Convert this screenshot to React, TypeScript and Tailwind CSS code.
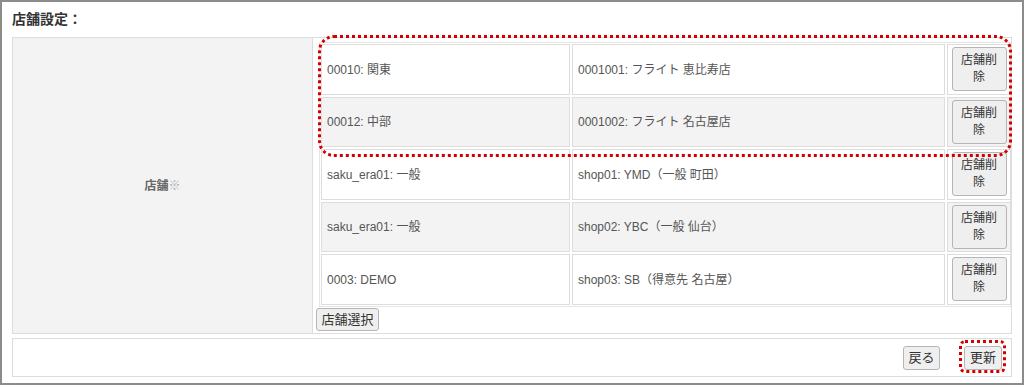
const rows = [
  { area: "00010: 関東", shop: "0001001: フライト 恵比寿店" },
  { area: "00012: 中部", shop: "0001002: フライト 名古屋店" },
  { area: "saku_era01: 一般", shop: "shop01: YMD（一般 町田）" },
  { area: "saku_era01: 一般", shop: "shop02: YBC（一般 仙台）" },
  { area: "0003: DEMO", shop: "shop03: SB（得意先 名古屋）" },
];

const btn =
  "rounded-[3px] border border-[#b5b5b5] bg-[#efefef] text-[12px] leading-[17px] text-[#333]";

export default function App() {
  return (
    <div
      className="relative w-[1024px] h-[385px] overflow-hidden border-2 border-[#8c8c8c] bg-white text-[#555]"
      style={{ fontFamily: '"Liberation Sans", "Noto Sans CJK JP", sans-serif' }}
    >
      <h2 className="h-[35px] px-[10px] pt-[8px] text-[14px] font-bold leading-[18px] text-[#333]">
        店舗設定：
      </h2>

      <div className="mx-[10px] flex h-[297px] border border-[#ddd]">
        <div className="flex w-[301px] items-center justify-center bg-[#f3f3f3] text-[12px] font-bold text-[#666]">
          店舗<span className="font-normal text-[#aaa]">※</span>
        </div>
        <div className="flex-1 border-l border-[#ddd] pl-[6px] pt-[4px]">
          <div className="relative w-[692px] border border-[#e6e6e6] p-[1px]">
            <div className="flex flex-col gap-[2px]">
              {rows.map((r, i) => (
                <div
                  key={i}
                  className="grid h-[50.5px] grid-cols-[249px_373px_64px] gap-[2px] text-[12px]"
                >
                  <div
                    className={`flex items-center border border-[#ddd] pl-[5px] pt-[1px] ${i % 2 ? "bg-[#f3f3f3]" : "bg-white"}`}
                  >
                    {r.area}
                  </div>
                  <div
                    className={`flex items-center border border-[#ddd] pl-[5px] pt-[1px] ${i % 2 ? "bg-[#f3f3f3]" : "bg-white"}`}
                  >
                    {r.shop}
                  </div>
                  <div
                    className={`flex items-center justify-center border border-[#ddd] ${i % 2 ? "bg-[#f3f3f3]" : "bg-white"}`}
                  >
                    <button className={`${btn} h-[44px] w-[55px] px-[2px]`}>
                      店舗削
                      <br />除
                    </button>
                  </div>
                </div>
              ))}
            </div>
            <div className="pointer-events-none absolute left-[-2px] top-[-8px] h-[122px] w-[694px] rounded-[16px] border-[3px] border-dotted border-[#d40000]" />
          </div>
          <button className={`${btn} h-[23px] w-[63px] -ml-[3px] text-[13px]`}>
            店舗選択
          </button>
        </div>
      </div>

      <div className="mx-[10px] mt-[4px] flex h-[39px] items-center justify-end gap-[24px] border border-[#ddd] pr-[9px]">
        <button className={`${btn} h-[24px] w-[37px] text-[13px]`}>戻る</button>
        <div className="relative">
          <button className={`${btn} h-[24px] w-[38px] text-[13px]`}>更新</button>
          <div className="pointer-events-none absolute -left-[5px] -top-[5px] h-[33px] w-[47px] rounded-[6px] border-[3px] border-dotted border-[#d40000]" />
        </div>
      </div>
    </div>
  );
}
